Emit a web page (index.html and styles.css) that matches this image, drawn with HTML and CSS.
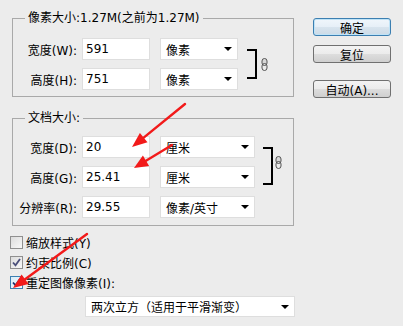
FILE: index.html
```html
<!DOCTYPE html>
<html lang="zh-CN">
<head>
<meta charset="UTF-8" />
<title>图像大小</title>
<link rel="stylesheet" href="styles.css">
</head>
<body>
<div class="dialog">
    <div class="main">
        <!-- 像素大小 -->
        <fieldset class="group group-pixel">
            <legend>像素大小:1.27M(之前为1.27M)</legend>
            <div class="grid">
                <label class="lbl">宽度(W):</label>
                <span class="field">591</span>
                <span class="select">像素<i class="caret"></i></span>
                <span class="bracket"></span>
                <svg class="chain" width="7" height="13" viewBox="0 0 7 13"><rect x="1" y="0.5" width="5" height="7" rx="2.5" fill="#d8d8d8" stroke="#555"/><rect x="1" y="5.5" width="5" height="7" rx="2.5" fill="none" stroke="#555"/></svg>

                <label class="lbl">高度(H):</label>
                <span class="field">751</span>
                <span class="select">像素<i class="caret"></i></span>
            </div>
        </fieldset>

        <!-- 文档大小 -->
        <fieldset class="group group-doc">
            <legend>文档大小:</legend>
            <div class="grid">
                <label class="lbl">宽度(D):</label>
                <span class="field">20</span>
                <span class="select">厘米<i class="caret"></i></span>
                <span class="bracket"></span>
                <svg class="chain" width="7" height="13" viewBox="0 0 7 13"><rect x="1" y="0.5" width="5" height="7" rx="2.5" fill="#d8d8d8" stroke="#555"/><rect x="1" y="5.5" width="5" height="7" rx="2.5" fill="none" stroke="#555"/></svg>

                <label class="lbl">高度(G):</label>
                <span class="field">25.41</span>
                <span class="select">厘米<i class="caret"></i></span>

                <label class="lbl">分辨率(R):</label>
                <span class="field">29.55</span>
                <span class="select">像素/英寸<i class="caret"></i></span>
            </div>
        </fieldset>

        <div class="checks">
            <div class="check"><span class="box"></span>缩放样式(Y)</div>
            <div class="check"><span class="box on dim"><svg width="11" height="11" viewBox="0 0 11 11"><path d="M2 5.5l2.5 2.8L9 2" fill="none" stroke="#4a4f7a" stroke-width="1.8"/></svg></span>约束比例(C)</div>
            <div class="check"><span class="box on focus"><svg width="11" height="11" viewBox="0 0 11 11"><path d="M2 5.5l2.5 2.8L9 2" fill="none" stroke="#1d2f6b" stroke-width="1.8"/></svg></span>重定图像像素(I):</div>
        </div>

        <div class="resample">
            <span class="select wide">两次立方（适用于平滑渐变）<i class="caret"></i></span>
        </div>
    </div>

    <div class="buttons">
        <button class="btn default">确定</button>
        <button class="btn">复位</button>
        <button class="btn auto">自动(A)...</button>
    </div>
</div>

<!-- 标注箭头 -->
<svg class="arrows" width="403" height="326" viewBox="0 0 403 326">
    <g stroke="#f21a1a" stroke-width="2.4" stroke-linecap="round">
        <line x1="185" y1="104" x2="143.7" y2="137.6"/>
        <line x1="172" y1="145" x2="146" y2="160.8"/>
        <line x1="87" y1="234" x2="25.1" y2="279.2"/>
    </g>
    <g fill="#f21a1a">
        <polygon points="132,147 147.5,142.3 139.9,132.9"/>
        <polygon points="134,168 149.1,165.9 142.9,155.6"/>
        <polygon points="13,288 28.6,284 21.6,274.4"/>
    </g>
</svg>
</body>
</html>
```

FILE: styles.css
```css
*{margin:0;padding:0;box-sizing:border-box}
body{
    width:403px;
    height:326px;
    overflow:hidden;
    position:relative;
    background:#ececec;
    font:12px "DejaVu Sans","Noto Sans CJK SC",sans-serif;
    color:#000;
}
.dialog{
    display:flex;
    gap:19px;
    padding:10px 0 0 12px;
}
.main{width:282px}

/* 分组框 */
.group{
    border:1px solid #a9a9a9;
    padding:12px 0 6px;
}
.group legend{
    margin-left:12px;
    padding:0 3px;
    line-height:16px;
}
.group-doc{
    margin-top:13px;
    padding:10px 0 7px;
}
.grid{
    display:grid;
    grid-auto-rows:22px;
    row-gap:8px;
    align-items:center;
}
.group-pixel .grid{grid-template-columns:69px 68px 88px 19px 11px}
.group-doc .grid{grid-template-columns:69px 68px 105px 18px 9px}
.lbl{
    text-align:right;
    padding-right:5px;
    white-space:nowrap;
}
.field,.select{
    height:22px;
    background:#fff;
    border:1px solid #dedede;
    display:flex;
    align-items:center;
}
.field{padding-left:3px}
.select{
    margin-left:10px;
    padding:0 5px 0 5px;
    justify-content:space-between;
    white-space:nowrap;
}
.caret{
    width:0;
    height:0;
    border-left:4px solid transparent;
    border-right:4px solid transparent;
    border-top:4px solid #000;
}
.bracket{
    grid-row:1 / span 2;
    grid-column:4;
    justify-self:end;
    align-self:stretch;
    width:10px;
    margin:11px 0;
    border:2px solid #000;
    border-left:none;
}
.group-doc .bracket{margin:11px 0 3px}
.chain{
    grid-row:1 / span 2;
    grid-column:5;
    justify-self:end;
    align-self:center;
}

/* 复选框 */
.checks{margin-top:6px}
.check{
    height:20px;
    display:flex;
    align-items:center;
    gap:3px;
    margin-left:-2px;
}
.box{
    width:13px;
    height:13px;
    border:1px solid #8f8f8f;
    background:linear-gradient(135deg,#dcdcdc,#f8f8f8);
    display:flex;
    align-items:center;
    justify-content:center;
}
.box.focus{
    border-color:#3c7fb1;
    background:linear-gradient(135deg,#d9ecf8,#f4f9fd);
}

.resample{
    margin:4px 0 0 73px;
}
.select.wide{
    margin-left:0;
    width:210px;
    height:21px;
}

/* 按钮 */
.buttons{
    display:flex;
    flex-direction:column;
    width:78px;
    padding-top:8px;
}
.btn{
    height:18px;
    font:inherit;
    color:#000;
    border:1px solid #707070;
    border-radius:3px;
    background:linear-gradient(#f3f3f3 0%,#ebebeb 50%,#dddddd 51%,#cfcfcf 100%);
}
.btn + .btn{margin-top:9px}
.btn.default{
    border-color:#3c7fb1;
    box-shadow:inset 0 0 0 1px #bfe3f7;
    background:linear-gradient(#f0f6fb 0%,#e6eff7 50%,#d8e4ee 51%,#ccdae6 100%);
}
.btn.auto{margin-top:17px}

.arrows{
    position:absolute;
    top:0;
    left:0;
    pointer-events:none;
}
```
